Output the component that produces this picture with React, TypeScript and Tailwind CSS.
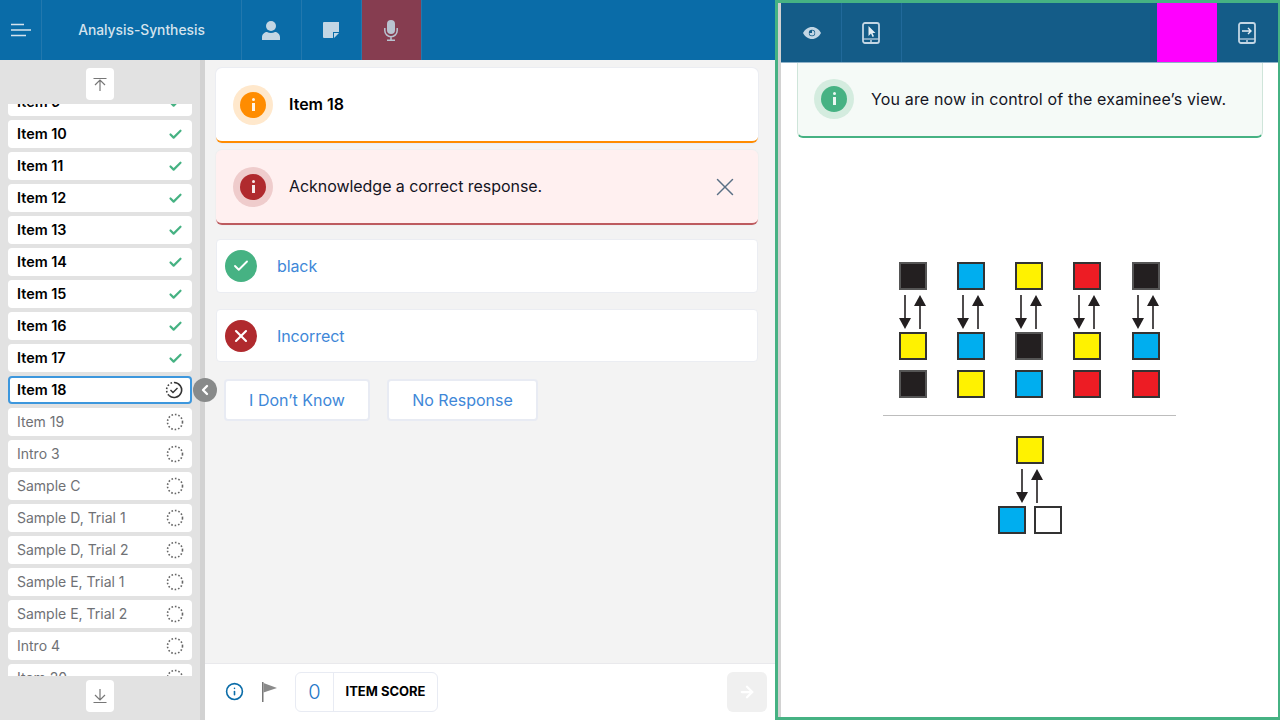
import { Check, ChevronLeft, X, ArrowRight, Info } from "lucide-react";

const doneItems = ["Item 9", "Item 10", "Item 11", "Item 12", "Item 13", "Item 14", "Item 15", "Item 16", "Item 17"];
const todoItems = [
  "Item 19",
  "Intro 3",
  "Sample C",
  "Sample D, Trial 1",
  "Sample D, Trial 2",
  "Sample E, Trial 1",
  "Sample E, Trial 2",
  "Intro 4",
  "Item 20",
];

const BLACK = "#231f20";
const BLUE = "#00aeef";
const YELLOW = "#fff200";
const RED = "#ed1c24";

const topRow = [BLACK, BLUE, YELLOW, RED, BLACK];
const midRow = [YELLOW, BLUE, BLACK, YELLOW, BLUE];
const lowRow = [BLACK, YELLOW, BLUE, RED, RED];
const colX = [1, 59, 117, 175, 234];

function DottedCircle() {
  return (
    <svg width="18" height="18" viewBox="0 0 18 18" className="shrink-0">
      <circle cx="9" cy="9" r="7.5" fill="none" stroke="#666" strokeWidth="1.6" strokeDasharray="1.6 1.9" />
    </svg>
  );
}

function CurrentCircle() {
  return (
    <svg width="18" height="18" viewBox="0 0 18 18" className="shrink-0">
      <path d="M9 1.500a7.500 7.500 0 1 1-5 13" fill="none" stroke="#333" strokeWidth="1.6" />
      <path d="M4 14.500A7.500 7.500 0 0 1 9 1.500" fill="none" stroke="#444" strokeWidth="1.6" strokeDasharray="1.6 1.9" />
      <path d="M5.500 9l2.500 2.500 4.500-4.500" fill="none" stroke="#333" strokeWidth="1.4" />
    </svg>
  );
}

function SideItem({ label, state }: { label: string; state: "done" | "current" | "todo" }) {
  return (
    <div
      className={`flex h-7 shrink-0 items-center justify-between rounded bg-white pr-2 ${
        state === "todo" ? "pl-[9px] text-sm font-normal text-[#6f7175]" : "text-[14.4px] font-semibold text-black"
      } ${state === "done" ? "pl-[9px]" : ""} ${state === "current" ? "border-2 border-[#3d97dd] pl-[7px] pr-[7px]" : ""}`}
    >
      <span>{label}</span>
      {state === "done" && <Check size={15} strokeWidth={3.5} className="mr-[1px] text-[#46b283]" />}
      {state === "current" && <CurrentCircle />}
      {state === "todo" && <DottedCircle />}
    </div>
  );
}

function Sidebar() {
  return (
    <aside className="relative flex w-[205px] shrink-0 flex-col border-r-[5px] border-[#d2d2d2] bg-[#e2e2e2]">
      <div className="flex h-11 shrink-0 items-start justify-center pt-2">
        <button className="flex h-8 w-7 items-center justify-center rounded bg-white">
          <svg width="16" height="16" viewBox="0 0 16 16" fill="none" stroke="#777" strokeWidth="1.2">
            <path d="M1.500 2.500h13M8 15V4M3 9l5-5 5 5" />
          </svg>
        </button>
      </div>
      <div className="flex-1 overflow-hidden px-2">
        <div className="-mt-4 flex flex-col gap-1">
          {doneItems.map((item) => (
            <SideItem key={item} label={item} state="done" />
          ))}
          <SideItem label="Item 18" state="current" />
          {todoItems.map((item) => (
            <SideItem key={item} label={item} state="todo" />
          ))}
        </div>
      </div>
      <div className="flex h-11 shrink-0 items-start justify-center pt-1">
        <button className="flex h-8 w-7 items-center justify-center rounded bg-white">
          <svg width="16" height="16" viewBox="0 0 16 16" fill="none" stroke="#777" strokeWidth="1.2">
            <path d="M1.500 14.500h13M8 1v10M3 7l5 5 5-5" />
          </svg>
        </button>
      </div>
      <button className="absolute left-[193px] top-[318px] flex h-6 w-6 items-center justify-center rounded-full bg-[#888a8a] text-white">
        <ChevronLeft size={16} strokeWidth={3.5} />
      </button>
    </aside>
  );
}

function NavCell({ children, width = "w-[60px] pr-[2px]", bg = "" }: { children?: React.ReactNode; width?: string; bg?: string }) {
  return (
    <div className={`flex h-full shrink-0 items-center justify-center border-r border-[#2278ae] ${width} ${bg}`}>{children}</div>
  );
}

function TopBar() {
  return (
    <header className="flex h-[60px] shrink-0 bg-[#0a6ca8]">
      <NavCell width="w-[42px]">
        <svg width="20" height="14" viewBox="0 0 20 14" fill="none" stroke="#d5e3ed" strokeWidth="1.6">
          <path d="M0 1.500h13M0 7h20M0 12.500h15" />
        </svg>
      </NavCell>
      <NavCell width="w-[200px]">
        <span className="text-[13.8px] font-medium text-[#d5e3ed]">Analysis-Synthesis</span>
      </NavCell>
      <NavCell>
        <svg width="18" height="19" viewBox="0 0 18 19" fill="#c3d6e4">
          <circle cx="9" cy="5" r="5" />
          <path d="M0 19v-3c0-3 3-5 5-5 1.200.7 2.600 1 4 1s2.800-.3 4-1c2 0 5 2 5 5v3z" />
        </svg>
      </NavCell>
      <NavCell>
        <svg width="16" height="16" viewBox="0 0 16 16" fill="#c3d6e4">
          <path d="M1 0h15v10l-1 0h-5v6H1a1 1 0 0 1-1-1V1a1 1 0 0 1 1-1zM11 11h5l-5 5z" />
        </svg>
      </NavCell>
      <NavCell bg="bg-[#863d50]">
        <svg width="14" height="21" viewBox="0 0 14 21" fill="none" stroke="#b9c3d0" strokeWidth="1.5">
          <rect x="3" y="0" width="8" height="14" rx="4" fill="#b9c3d0" stroke="none" />
          <path d="M.8 8v2.500a6.200 6.200 0 0 0 12.400 0V8M7 17v3M3 20.200h8" />
        </svg>
      </NavCell>
    </header>
  );
}

function Badge({ solid, halo }: { solid: string; halo: string }) {
  return (
    <div className={`flex h-10 w-10 shrink-0 items-center justify-center rounded-full ${halo}`}>
      <div className={`flex h-[26px] w-[26px] flex-col items-center justify-center gap-[2px] rounded-full ${solid}`}>
        <span className="h-[3px] w-[3px] rounded-full bg-white/90" />
        <span className="h-2 w-[3px] bg-white/90" />
      </div>
    </div>
  );
}

function AnswerRow({ label, color, children, height }: { label: string; color: string; children: React.ReactNode; height: string }) {
  return (
    <div className={`flex items-center rounded border border-[#ebedf2] bg-white pl-2 ${height}`}>
      <div className={`flex h-8 w-8 items-center justify-center rounded-full text-white ${color}`}>{children}</div>
      <span className="ml-5 text-base tracking-[-0.1px] text-[#3e87d8]">{label}</span>
    </div>
  );
}

function MainPanel() {
  return (
    <main className="flex min-w-0 flex-1 flex-col bg-[#f3f3f3]">
      <div className="flex flex-1 flex-col pl-[11px] pr-[17px] pt-2">
        <div className="flex h-[75px] items-center rounded-md border-b-2 border-[#ff8c00] bg-white pl-[17px] shadow-[0_0_0_1px_#ebedf2]">
          <Badge solid="bg-[#ff8c00]" halo="bg-[#ffe8cc]" />
          <span className="mb-[2px] ml-4 text-base font-semibold text-black">Item 18</span>
        </div>
        <div className="mt-[7px] flex h-[75px] items-center rounded-md border-b-2 border-[#bd5b5f] bg-[#fff0f0] pl-[17px] pr-[18px] shadow-[0_0_0_1px_#efefef]">
          <Badge solid="bg-[#b02a2e]" halo="bg-[#efcccc]" />
          <span className="mb-[2px] ml-4 flex-1 text-base tracking-[-0.05px] text-[#14141f]">Acknowledge a correct response.</span>
          <X size={30} strokeWidth={1.2} className="text-[#5a7085]" />
        </div>
        <div className="mt-[14px]">
          <AnswerRow label="black" color="bg-[#46b283]" height="h-[54px]">
            <Check size={18} strokeWidth={2.5} />
          </AnswerRow>
        </div>
        <div className="mt-4">
          <AnswerRow label="Incorrect" color="bg-[#b02a2e]" height="h-[53px]">
            <X size={20} strokeWidth={2.5} />
          </AnswerRow>
        </div>
        <div className="mt-[17px] flex gap-[17px] pl-2">
          <button className="h-[42px] w-[146px] rounded border-2 border-[#e8ebf3] bg-white text-base text-[#3e87d8]">
            I Don’t Know
          </button>
          <button className="h-[42px] w-[151px] rounded border-2 border-[#e8ebf3] bg-white text-base text-[#3e87d8]">
            No Response
          </button>
        </div>
      </div>
      <footer className="flex h-[57px] shrink-0 items-center border-t border-[#e9e9ec] bg-white pb-[1px] pl-5 pr-2">
        <Info size={19} strokeWidth={2} className="text-[#0a6ca8]" />
        <svg width="16" height="20" viewBox="0 0 16 20" className="ml-[17px]">
          <path d="M1 0h1.500v20H1z" fill="#777" />
          <path d="M2.500 1L16 6 2.500 10.500z" fill="#8a8a8a" />
        </svg>
        <div className="ml-[18px] flex h-10 w-[143px] items-center rounded-md border border-[#e8ebf3]">
          <span className="flex h-full w-[38px] items-center justify-center border-r border-[#e8ebf3] text-xl font-light text-[#1f78c8]">
            0
          </span>
          <span className="flex-1 text-center text-[13px] font-bold text-black">ITEM SCORE</span>
        </div>
        <button className="ml-auto flex h-10 w-10 items-center justify-center rounded-md bg-[#f0f0f0] text-white">
          <ArrowRight size={18} strokeWidth={3} />
        </button>
      </footer>
    </main>
  );
}

function Square({ x, y, fill }: { x: number; y: number; fill: string }) {
  return <rect x={x} y={y} width="26" height="26" fill={fill} stroke={fill === BLACK ? "#555" : "#333"} strokeWidth="2" />;
}

function Arrows({ x, y }: { x: number; y: number }) {
  return (
    <g>
      <path d={`M${x + 7} ${y}v24`} stroke={BLACK} strokeWidth="1.6" />
      <path d={`M${x + 1} ${y + 23}h12l-6 11z`} fill={BLACK} />
      <path d={`M${x + 22} ${y + 10}v24`} stroke={BLACK} strokeWidth="1.6" />
      <path d={`M${x + 16} ${y + 11}h12l-6 -11z`} fill={BLACK} />
    </g>
  );
}

function Exhibit() {
  return (
    <svg width="294" height="274" viewBox="0 0 294 274" className="block">
      {topRow.map((fill, i) => (
        <Square key={i} x={colX[i] + 16} y={1} fill={fill} />
      ))}
      {colX.map((x, i) => (
        <Arrows key={i} x={x + 14} y={33} />
      ))}
      {midRow.map((fill, i) => (
        <Square key={i} x={colX[i] + 16} y={71} fill={fill} />
      ))}
      {lowRow.map((fill, i) => (
        <Square key={i} x={colX[i] + 16} y={109} fill={fill} />
      ))}
      <path d="M0 153.500h293" stroke="#bdbdbd" strokeWidth="1" />
      <Square x={134} y={175} fill={YELLOW} />
      <Arrows x={132} y={207} />
      <Square x={116} y={245} fill={BLUE} />
      <Square x={152} y={245} fill="#ffffff" />
    </svg>
  );
}

function TabletIcon({ children }: { children: React.ReactNode }) {
  return (
    <svg width="18" height="22" viewBox="0 0 18 22" fill="none">
      <rect x="1" y="1" width="16" height="20" rx="2" stroke="#c3d6e4" strokeWidth="1.8" />
      <path d="M1 17h16" stroke="#c3d6e4" strokeWidth="1.2" />
      <circle cx="9" cy="19" r="1" fill="#c3d6e4" />
      {children}
    </svg>
  );
}

function ExamineePanel() {
  return (
    <section className="flex w-[505px] shrink-0 flex-col border-[3px] border-r-2 border-[#46b283]">
      <div className="flex min-h-0 flex-1 border-l-[3px] border-[#d2d2d2] bg-white">
        <div className="flex min-w-0 flex-1 flex-col">
          <div className="flex h-[60px] shrink-0 border-b border-[#8fb2c8] bg-[#145c88]">
            <div className="flex h-full w-[61px] items-center justify-center border-r border-[#21699a] pl-px">
              <svg width="18" height="12" viewBox="0 0 18 12">
                <path d="M0 6c2-3.500 5-6 9-6s7 2.500 9 6c-2 3.500-5 6-9 6s-7-2.500-9-6z" fill="#c3d6e4" />
                <circle cx="9" cy="6" r="3.200" fill="#145c88" />
                <path d="M9 6V3.500A2.500 2.500 0 1 1 6.500 6z" fill="#c3d6e4" />
              </svg>
            </div>
            <div className="flex h-full w-[60px] items-center justify-center border-r border-[#21699a] pr-[2px]">
              <TabletIcon>
                <path d="M6.500 4v10l2.500-2.500 1.500 3.500 1.500-.7-1.500-3.300h3z" fill="#e4edf3" />
              </TabletIcon>
            </div>
            <div className="ml-auto h-full w-[60px] bg-[#ff00ff]" />
            <div className="flex h-full w-[61px] items-center justify-center pr-[2px]">
              <TabletIcon>
                <path d="M4 9h9M10 6l3 3-3 3" stroke="#e4edf3" strokeWidth="1.400" />
              </TabletIcon>
            </div>
          </div>
          <div className="ml-4 mr-[15px] flex h-[75px] shrink-0 items-center rounded-b-md border-x border-b-2 border-x-[#cfe5da] border-b-[#46b283] bg-[#f5faf7] pb-[2px] pl-4">
            <Badge solid="bg-[#46b283]" halo="bg-[#d4ecdf]" />
            <span className="ml-[17px] text-base tracking-[0.15px] text-[#14141f]">You are now in control of the examinee’s view.</span>
          </div>
          <div className="ml-[102px] mt-[124px]">
            <Exhibit />
          </div>
        </div>
      </div>
    </section>
  );
}

export default function App() {
  return (
    <div className="flex h-[720px] w-[1280px] overflow-hidden bg-white font-['Inter',sans-serif]">
      <div className="flex w-[775px] shrink-0 flex-col">
        <TopBar />
        <div className="flex min-h-0 flex-1">
          <Sidebar />
          <MainPanel />
        </div>
      </div>
      <ExamineePanel />
    </div>
  );
}
